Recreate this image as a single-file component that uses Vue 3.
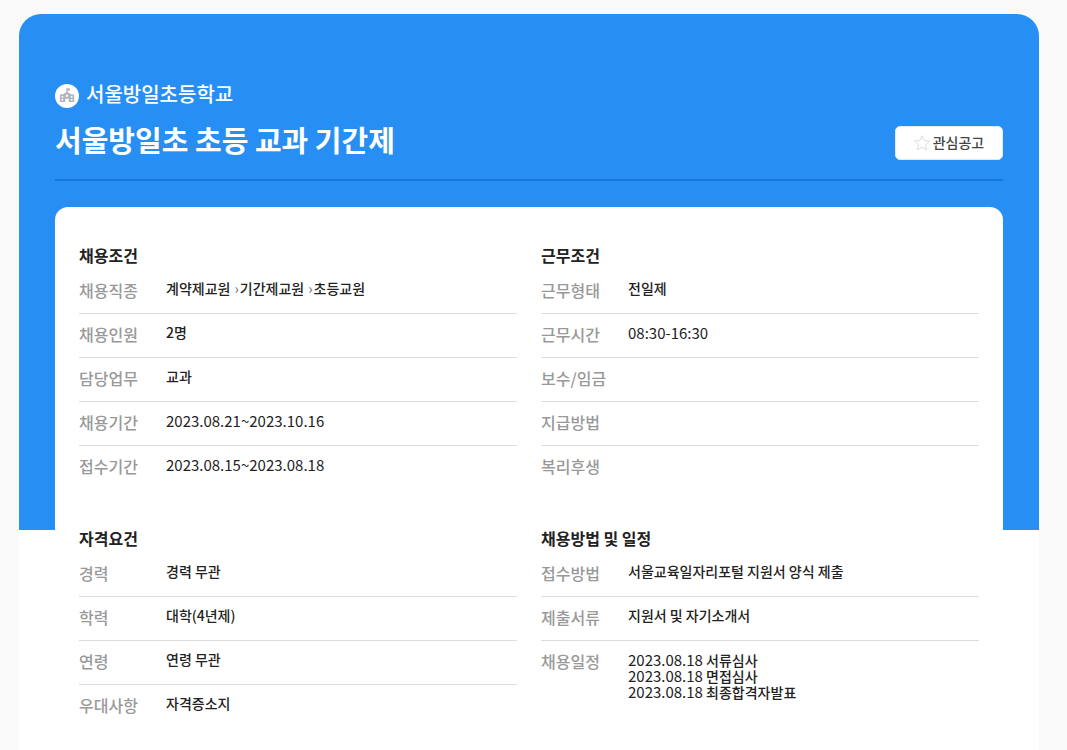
<template>
  <div class="page">
    <main class="posting">
      <header class="posting-header">
        <div class="titles">
          <p class="school">
            <svg class="school-icon" viewBox="0 0 24 24" aria-hidden="true">
              <circle cx="12" cy="12" r="12" fill="#fff" />
              <path
                fill="#b2b6bd"
                fill-rule="evenodd"
                d="M11.300 4.300h3.500v2.400h-2.200v1.300l3.400 2.200h2.200l1 1v6.800h-5.500v-3.200h-3.400v3.200H4.800v-6.800l1-1H8l3.300-2.200zM6.600 12v1.500h1.600v-1.500zM6.600 14.900v1.600h1.600v-1.600zM15.800 12v1.500h1.600v-1.500zM15.800 14.900v1.600h1.600v-1.600zM11 10.800v1.900h2v-1.900z"
              />
            </svg>
            <span>서울방일초등학교</span>
          </p>
          <h1>서울방일초 초등 교과 기간제</h1>
        </div>
        <button type="button" class="btn-favorite">
          <svg class="star" viewBox="0 0 16 16" aria-hidden="true">
            <path
              d="M8 .7l2.200 4.800 5.200.6-3.900 3.600 1.100 5.200L8 12.300l-4.600 2.600 1.100-5.200L.6 6.100l5.200-.6z"
              fill="none"
              stroke="#dcdcdc"
              stroke-linejoin="round"
            />
          </svg>
          <span>관심공고</span>
        </button>
      </header>

      <div class="card">
        <section v-for="section in sections" :key="section.title">
          <h2>{{ section.title }}</h2>
          <dl>
            <div v-for="row in section.rows" :key="row.label" class="row">
              <dt>{{ row.label }}</dt>
              <dd>
                <template v-if="row.path">
                  <template v-for="(step, i) in row.path" :key="step">
                    <span v-if="i > 0" class="arrow">›</span>{{ step }}
                  </template>
                </template>
                <ul v-else-if="row.schedule">
                  <li v-for="item in row.schedule" :key="item.name">
                    <span class="number">{{ item.date }}</span> {{ item.name }}
                  </li>
                </ul>
                <span v-else :class="{ number: row.numeric }">{{ row.value }}</span>
              </dd>
            </div>
          </dl>
        </section>
      </div>
    </main>
  </div>
</template>

<script setup>
const sections = [
  {
    title: '채용조건',
    rows: [
      { label: '채용직종', path: ['계약제교원', '기간제교원', '초등교원'] },
      { label: '채용인원', value: '2명' },
      { label: '담당업무', value: '교과' },
      { label: '채용기간', value: '2023.08.21~2023.10.16', numeric: true },
      { label: '접수기간', value: '2023.08.15~2023.08.18', numeric: true },
    ],
  },
  {
    title: '근무조건',
    rows: [
      { label: '근무형태', value: '전일제' },
      { label: '근무시간', value: '08:30-16:30', numeric: true },
      { label: '보수/임금', value: '' },
      { label: '지급방법', value: '' },
      { label: '복리후생', value: '' },
    ],
  },
  {
    title: '자격요건',
    rows: [
      { label: '경력', value: '경력 무관' },
      { label: '학력', value: '대학(4년제)' },
      { label: '연령', value: '연령 무관' },
      { label: '우대사항', value: '자격증소지' },
    ],
  },
  {
    title: '채용방법 및 일정',
    rows: [
      { label: '접수방법', value: '서울교육일자리포털 지원서 양식 제출' },
      { label: '제출서류', value: '지원서 및 자기소개서' },
      {
        label: '채용일정',
        schedule: [
          { date: '2023.08.18', name: '서류심사' },
          { date: '2023.08.18', name: '면접심사' },
          { date: '2023.08.18', name: '최종합격자발표' },
        ],
      },
    ],
  },
];
</script>

<style>
body {
  margin: 0;
  background: #f9f9f9;
}
</style>

<style scoped>
.page {
  box-sizing: border-box;
  display: flex;
  min-height: 100vh;
  padding: 14px 28px 0 19px;
  font-family: "Noto Sans CJK KR", sans-serif;
  font-size: 14px;
  font-weight: 500;
  color: #222;
}
.posting {
  box-sizing: border-box;
  flex: 1;
  padding: 66px 36px 0;
  border-radius: 22px 22px 0 0;
  background: linear-gradient(#278ff4 516px, #fff 516px);
}
.posting-header {
  display: flex;
  justify-content: space-between;
  align-items: flex-end;
  padding-bottom: 19px;
  border-bottom: 2px solid #1678d8;
  margin-bottom: 26px;
}
.school {
  display: flex;
  align-items: flex-end;
  gap: 7px;
  margin: 0 0 10px;
  color: #fff;
  font-size: 20px;
  line-height: 28px;
}
.school-icon {
  width: 24px;
  height: 24px;
}
h1 {
  margin: 0;
  color: #fff;
  font-size: 29px;
  line-height: 42px;
}
.btn-favorite {
  display: flex;
  align-items: center;
  justify-content: center;
  gap: 3px;
  width: 108px;
  height: 34px;
  padding: 0;
  border: 1px solid #e2e8f0;
  border-radius: 5px;
  background: #fff;
  color: #444;
  font-family: inherit;
  font-size: 14px;
  font-weight: 500;
  cursor: pointer;
}
.btn-favorite span {
  padding-bottom: 2px;
}
.star {
  width: 16px;
  height: 16px;
}
.card {
  display: grid;
  grid-template-columns: 1fr 1fr;
  gap: 37px 24px;
  padding: 36px 24px 0;
  border-radius: 13px 13px 0 0;
  background: #fff;
}
h2 {
  margin: 0 0 2px;
  font-size: 16px;
  line-height: 25px;
}
dl {
  margin: 0;
}
.row {
  display: flex;
  align-items: flex-start;
  padding: 8px 0 11px;
  border-bottom: 1px solid #ddd;
}
.row:last-child {
  border-bottom: 0;
}
dt {
  width: 87px;
  color: #999;
  font-size: 16px;
  line-height: 24px;
}
dd {
  flex: 1;
  margin: 0;
  padding-top: 2px;
  line-height: 17px;
}
ul {
  margin: 0;
  padding: 1px 0 0;
  list-style: none;
  line-height: 16px;
}
.number {
  font-size: 15px;
  font-weight: 400;
}
.arrow {
  margin: 0 1px 0 4px;
  color: #777;
}
</style>
